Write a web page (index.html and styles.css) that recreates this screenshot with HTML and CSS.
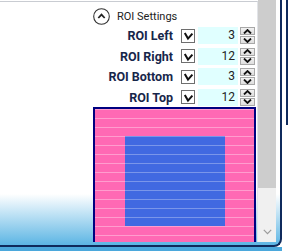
FILE: index.html
```html
<!DOCTYPE html>
<html lang="en">
<head>
    <meta charset="UTF-8">
    <meta name="viewport" content="width=device-width, initial-scale=1.0">
    <title>ROI Settings</title>
    <link rel="stylesheet" href="styles.css">
</head>
<body>
    <div class="screen">
        <div class="window">
            <div class="panel">
                <div class="header">
                    <svg class="collapse" width="17" height="17" viewBox="0 0 17 17">
                        <circle cx="8.5" cy="8.5" r="7.8" fill="#fff" stroke="#333" stroke-width="1.1"/>
                        <path d="M5.3 10 L8.5 6.6 L11.7 10" fill="none" stroke="#222" stroke-width="1.8"/>
                    </svg>
                    <span>ROI Settings</span>
                </div>

                <div class="rows">
                    <div class="row">
                        <label>ROI Left</label>
                        <span class="check"><svg width="11" height="11" viewBox="0 0 11 11"><path d="M1.8 3 L5 8.6 L9.4 3.6" fill="none" stroke="#111" stroke-width="2"/></svg></span>
                        <div class="num">3</div>
                        <div class="spin">
                            <span class="btn"><svg width="9" height="5" viewBox="0 0 9 5"><path d="M1 4.5 L4.5 1 L8 4.5" fill="none" stroke="#111" stroke-width="1.8"/></svg></span>
                            <span class="btn"><svg width="9" height="5" viewBox="0 0 9 5"><path d="M1 0.5 L4.5 4 L8 0.5" fill="none" stroke="#111" stroke-width="1.8"/></svg></span>
                        </div>
                    </div>
                    <div class="row">
                        <label>ROI Right</label>
                        <span class="check"><svg width="11" height="11" viewBox="0 0 11 11"><path d="M1.8 3 L5 8.6 L9.4 3.6" fill="none" stroke="#111" stroke-width="2"/></svg></span>
                        <div class="num">12</div>
                        <div class="spin">
                            <span class="btn"><svg width="9" height="5" viewBox="0 0 9 5"><path d="M1 4.5 L4.5 1 L8 4.5" fill="none" stroke="#111" stroke-width="1.8"/></svg></span>
                            <span class="btn"><svg width="9" height="5" viewBox="0 0 9 5"><path d="M1 0.5 L4.5 4 L8 0.5" fill="none" stroke="#111" stroke-width="1.8"/></svg></span>
                        </div>
                    </div>
                    <div class="row">
                        <label>ROI Bottom</label>
                        <span class="check"><svg width="11" height="11" viewBox="0 0 11 11"><path d="M1.8 3 L5 8.6 L9.4 3.6" fill="none" stroke="#111" stroke-width="2"/></svg></span>
                        <div class="num">3</div>
                        <div class="spin">
                            <span class="btn"><svg width="9" height="5" viewBox="0 0 9 5"><path d="M1 4.5 L4.5 1 L8 4.5" fill="none" stroke="#111" stroke-width="1.8"/></svg></span>
                            <span class="btn"><svg width="9" height="5" viewBox="0 0 9 5"><path d="M1 0.5 L4.5 4 L8 0.5" fill="none" stroke="#111" stroke-width="1.8"/></svg></span>
                        </div>
                    </div>
                    <div class="row">
                        <label>ROI Top</label>
                        <span class="check"><svg width="11" height="11" viewBox="0 0 11 11"><path d="M1.8 3 L5 8.6 L9.4 3.6" fill="none" stroke="#111" stroke-width="2"/></svg></span>
                        <div class="num">12</div>
                        <div class="spin">
                            <span class="btn"><svg width="9" height="5" viewBox="0 0 9 5"><path d="M1 4.5 L4.5 1 L8 4.5" fill="none" stroke="#111" stroke-width="1.8"/></svg></span>
                            <span class="btn"><svg width="9" height="5" viewBox="0 0 9 5"><path d="M1 0.5 L4.5 4 L8 0.5" fill="none" stroke="#111" stroke-width="1.8"/></svg></span>
                        </div>
                    </div>
                </div>

                <div class="preview">
                    <div class="image">
                        <div class="roi"></div>
                    </div>
                </div>
            </div>

            <div class="scrollbar">
                <div class="thumb"></div>
                <div class="track">
                    <svg width="9" height="6" viewBox="0 0 9 6"><path d="M0.8 0.8 L4.5 4.6 L8.2 0.8" fill="none" stroke="#9a9a9a" stroke-width="1.2"/></svg>
                </div>
            </div>
        </div>
        <div class="outer"></div>
    </div>
    <div class="bottom"></div>
</body>
</html>
```

FILE: styles.css
```css
html, body { margin: 0; padding: 0; }
body { width: 288px; height: 251px; overflow: hidden; background: #fff; font-family: Roboto, "Liberation Sans", sans-serif; }

.screen { display: flex; height: 247px; }
.window {
    width: 280px; height: 245px; display: flex;
    border-right: 2px solid #0f2a5c; border-bottom: 2px solid #0f2a5c;
    border-bottom-right-radius: 8px;
    background: linear-gradient(to bottom, #fff 0, #fff 194px, #5cb5e4 245px);
}
.outer { width: 4px; height: 125px; border-right: 2px solid #0f2a5c; }
.bottom { height: 4px; width: 282px; background: #4ba8dc; }

/* panel is cut at the bottom: the preview runs on below the scroll area */
.panel { width: 257px; height: 240px; overflow: hidden; border-top: 1px solid #c9ccd2; margin-top: 1px; border-right: 1px solid #e2e4e8; }

.header { display: flex; align-items: center; padding-left: 93px; height: 18px; margin-top: 5px; }
.header span { margin-left: 7px; font-size: 11px; color: #222; }
.collapse { display: block; }

.rows { display: flex; flex-direction: column; gap: 3.5px; margin-top: 2px; }
.row { display: flex; align-items: center; justify-content: flex-end; height: 17px; padding-right: 2px; }
.row label { font-weight: 700; font-size: 12.5px; color: #17264a; }
.check {
    width: 12px; height: 12px; margin-left: 8px; border: 1px solid #6e6e6e; background: #fff;
    display: flex; align-items: center; justify-content: center;
}
.check svg { display: block; }
.num {
    width: 37px; height: 17px; margin-left: 3px; padding-right: 3px; background: #e0ffff;
    font-size: 12px; color: #222; text-align: right; line-height: 17px;
}
.spin { display: flex; flex-direction: column; gap: 1px; margin-left: 2px; }
.btn {
    width: 13px; height: 6px; border: 1px solid #a8a8a8; background: linear-gradient(#f2f2f2, #dedede);
    display: flex; align-items: center; justify-content: center;
}
.btn svg { display: block; }

.preview { margin: 1px 0 0 93px; width: 159px; height: 150px; border: 2px solid #000080; }
.image {
    height: 150px; padding-top: 27px; box-sizing: border-box; background-color: #ff69b4;
    background-image: repeating-linear-gradient(to bottom, rgba(255,255,255,0.35) 0, rgba(255,255,255,0.35) 1px, transparent 1px, transparent 9px);
}
.roi {
    margin-left: 30px; width: 100px; height: 90px; background-color: #4169e1;
    background-image: repeating-linear-gradient(to bottom, rgba(255,255,255,0.3) 0, rgba(255,255,255,0.3) 1px, transparent 1px, transparent 9px);
}

.scrollbar { width: 18px; height: 242px; display: flex; flex-direction: column; }
.thumb { height: 188px; background: #cdcdcd; }
.track { flex: 1; background: #f0f0f0; display: flex; align-items: flex-end; justify-content: center; padding-bottom: 7px; }
.track svg { display: block; }
```
